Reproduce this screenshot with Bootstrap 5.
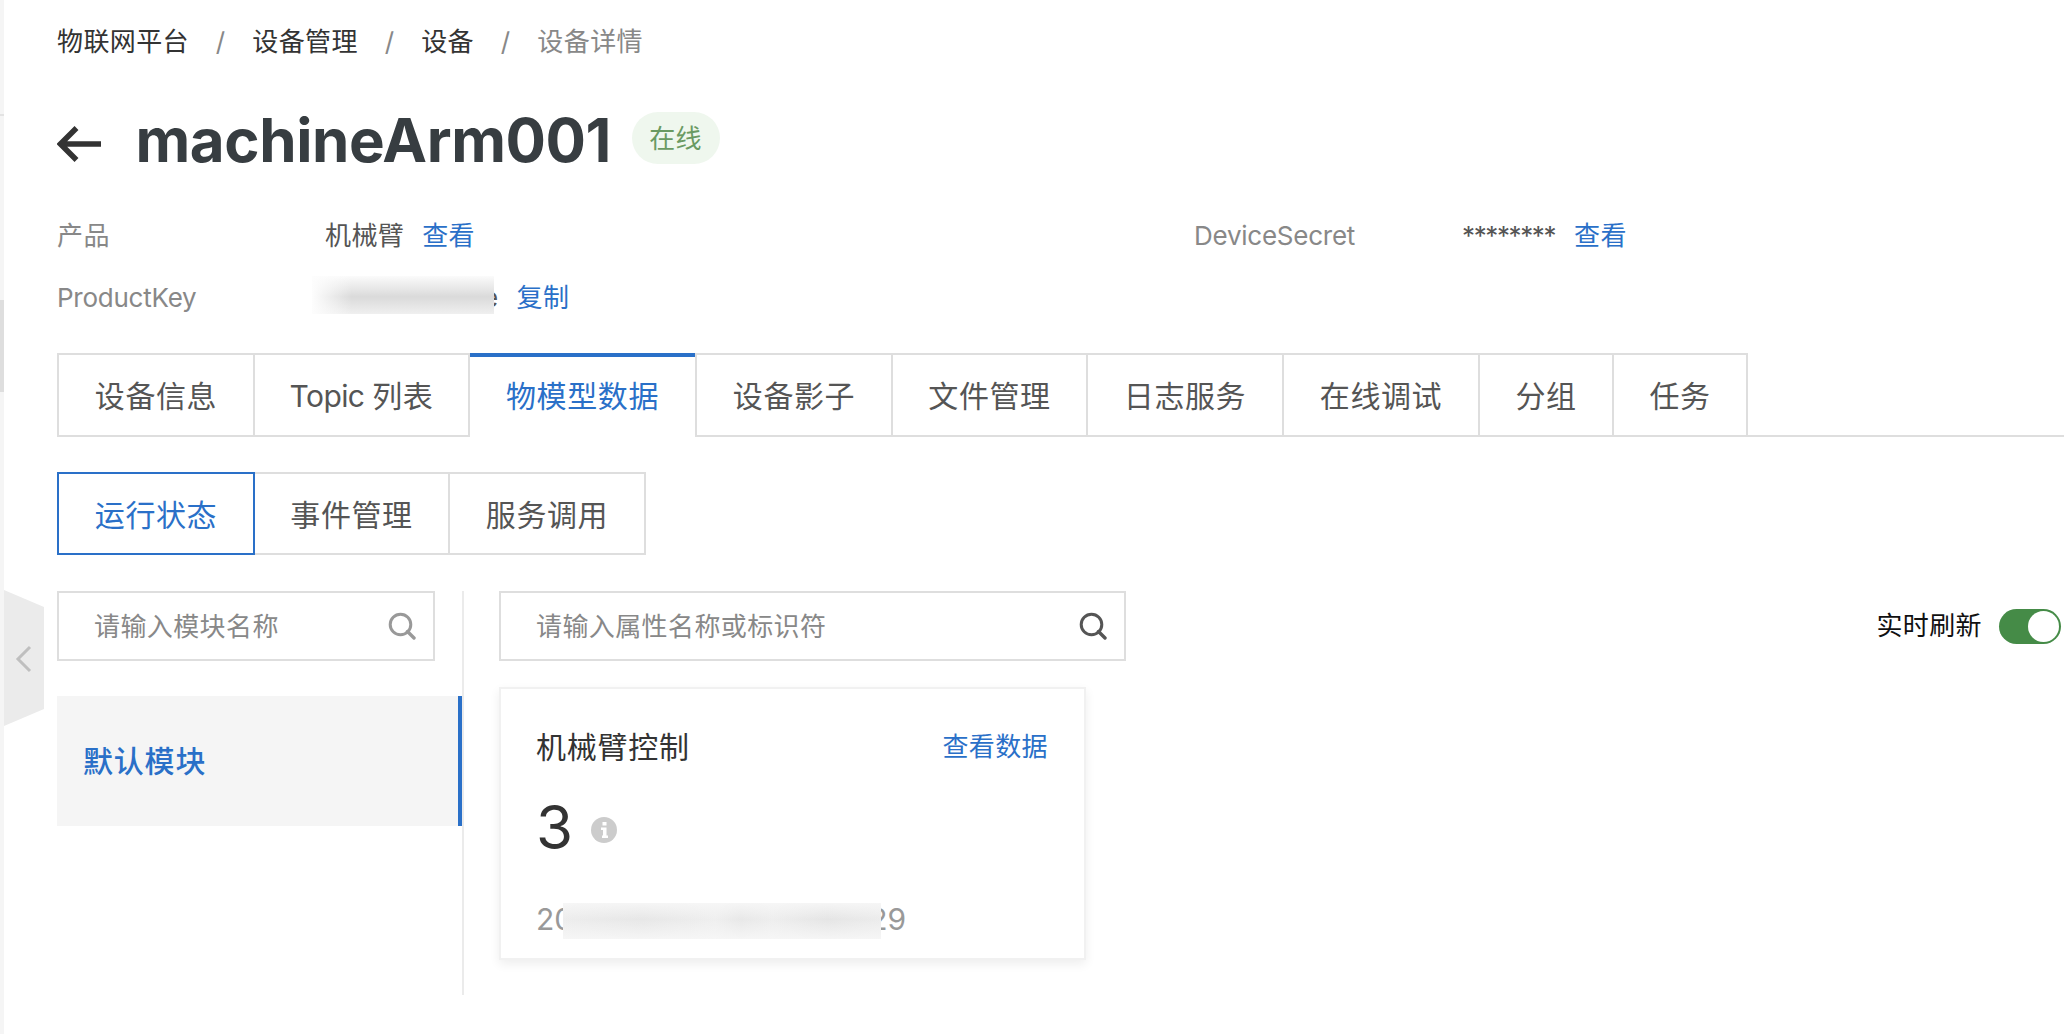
<!DOCTYPE html>
<html lang="zh-CN">
<head>
<meta charset="utf-8">
<title>设备详情</title>
<link href="https://cdn.jsdelivr.net/npm/bootstrap@5.3.0/dist/css/bootstrap.min.css" rel="stylesheet">
<style>
body{font-family:Inter,"Noto Sans CJK SC",sans-serif;font-size:26px;line-height:40px;letter-spacing:.4px;color:#333;background:#fff;height:1034px;overflow:hidden}
a{color:#2a70c8;text-decoration:none}
.side-rail{width:4px;background:#f5f5f5}
.rail-line{height:2px;margin-top:114px;background:#e3e3e3}
.rail-thumb{height:92px;margin-top:184px;background:#dedede}
.rail-handle{left:4px;top:590px;width:40px;height:136px}
.page-main{padding:22px 0 0 53px;min-width:0}
.crumbs{height:40px}
.crumbs a{color:#333}
.crumbs .cur{color:#888}
.crumbs .sep{color:#888;width:63.3px;text-align:center}
.title-row{height:60px;margin-top:47px}
.back-arrow{margin-top:10px}
.title-row h1{font-size:60px;line-height:60px;font-weight:700;color:#373d41;letter-spacing:-.4px;margin:1px 0 0 34.500px}
.state-badge{width:88px;height:52px;border-radius:26px;background:#eff7ee;color:#6a9a62;font-size:26px;font-weight:400;line-height:53px;padding:0;margin:-2px 0 0 20.500px}
.info-list{margin-top:36px}
.info-row{height:62px}
.info-label{width:268px;color:#888}
.info-label.latin{letter-spacing:-.25px}
.stars{letter-spacing:-1.400px}
.info-col{width:1137px}
.info-value{color:#555}
.info-row a{margin-left:18px}
.info-row .stars + a{margin-left:19px}
.masked{width:182px;height:38px;margin:-6px 0 0 -13px;z-index:1;background:linear-gradient(90deg,#fdfdfd,rgba(253,253,253,0) 22%),linear-gradient(180deg,#fbfbfb,rgba(251,251,251,0) 55%,rgba(251,251,251,.65)),#dadada}
.tail-e{margin-left:-11px}
.main-tabs{height:84px;margin-top:24px}
.main-tabs .nav-link,.sub-tabs .nav-link{padding:0;border:0 solid #dedede;border-radius:0;color:#555;font-size:30px;letter-spacing:.6px;text-align:center}
.main-tabs .nav-link{height:84px;line-height:82px;border-width:2px 0 2px 2px}
.main-tabs .nav-link.active{color:#2a70c8;border:0;border-top:4px solid #2a70c8;line-height:78px}
.main-tabs .end-edge{border-right-width:2px}
.topic-word{letter-spacing:-.6px}
.tabs-rest{border-bottom:2px solid #dedede}
.w196{width:196px}.w195{width:195px}.w217{width:217px}.w225{width:225px}.w134{width:134px}.w136{width:136px}.w198{width:198px}
.sub-tabs{margin-top:35px;height:83px}
.sub-tabs .nav-link{height:83px;line-height:82px;border-width:2px 2px 2px 0}
.sub-tabs .nav-link.active{border:2px solid #2a70c8;color:#2a70c8;background:#fff}
.work-area{margin-top:36px;height:404px}
.module-col{width:407px;border-right:2px solid #ebebeb}
.search-field{height:70px;border:2px solid #dedede;padding:0 17px 0 35px;color:#888}
.search-field span{padding-top:2px}
.module-search{width:378px}
.prop-search{width:627px}
.module-item{height:130px;margin-top:35px;padding-left:26px;background:#f5f5f5;border-right:4px solid #2a70c8;color:#2a70c8;font-size:30px;font-weight:500;letter-spacing:.8px}
.prop-col{padding-left:35px}
.prop-card{width:587px;height:273px;margin-top:26px;padding:38px 36px 0 35px;border:2px solid #f1f1f1;border-radius:0;box-shadow:0 4px 10px rgba(0,0,0,.07)}
.prop-name{font-size:30px;letter-spacing:.75px}
.prop-value{font-size:60px;line-height:60px;margin-top:30px}
.prop-value svg{margin:5px 0 0 18px}
.prop-time{font-size:30px;color:#999;letter-spacing:0;margin-top:42px}
.time-mask{width:318px;height:36px;margin:3px -12px 0 -10px;z-index:1;background:linear-gradient(180deg,rgba(247,247,247,.9),rgba(247,247,247,0) 45%,rgba(247,247,247,.9)),linear-gradient(90deg,#ededed,#e7e7e7 25%,#efefef 48%,#e8e8e8 56%,#eee 66%,#e5e5e5 83%,#ececec)}
.refresh{height:70px;margin-right:3px;color:#111}
.toggle-pill{width:62px;height:35px;border-radius:18px;background:#458b47;padding:2px;margin-left:17px}
.toggle-knob{width:31px;height:31px;border-radius:50%;background:#fff}
</style>
</head>
<body class="d-flex">
<aside class="side-rail flex-shrink-0"><div class="rail-line"></div><div class="rail-thumb"></div></aside>
<svg class="rail-handle position-absolute" viewBox="0 0 40 136"><path d="M0 0L40 17V119L0 136Z" fill="#ebebeb"/><path d="M26 57L14 69L26 81" fill="none" stroke="#bfbfbf" stroke-width="3"/></svg>
<main class="page-main flex-grow-1">
<nav class="crumbs d-flex"><a href="#">物联网平台</a><span class="sep">/</span><a href="#">设备管理</a><span class="sep">/</span><a href="#">设备</a><span class="sep">/</span><span class="cur">设备详情</span></nav>
<div class="title-row d-flex align-items-center">
<svg class="back-arrow" width="44" height="36" viewBox="0 0 44 36"><path d="M19.500 2L3.500 18L19.500 34M3.500 18H44" fill="none" stroke="#333" stroke-width="5.500"/></svg>
<h1>machineArm001</h1><span class="badge state-badge">在线</span>
</div>
<div class="info-list">
<div class="info-row d-flex align-items-center"><div class="info-col d-flex"><span class="info-label">产品</span><span class="info-value">机械臂</span><a href="#">查看</a></div><div class="d-flex"><span class="info-label latin">DeviceSecret</span><span class="info-value stars">********</span><a href="#">查看</a></div></div>
<div class="info-row d-flex align-items-center"><span class="info-label latin">ProductKey</span><span class="masked"></span><span class="tail-e info-value">e</span><a href="#">复制</a></div>
</div>
<nav class="nav main-tabs flex-nowrap">
<a class="nav-link w196" href="#">设备信息</a><a class="nav-link end-edge w217" href="#"><span class="topic-word">Topic </span>列表</a><a class="nav-link active w225" href="#">物模型数据</a><a class="nav-link w196" href="#">设备影子</a><a class="nav-link w195" href="#">文件管理</a><a class="nav-link w196" href="#">日志服务</a><a class="nav-link w196" href="#">在线调试</a><a class="nav-link w134" href="#">分组</a><a class="nav-link end-edge w136" href="#">任务</a><span class="tabs-rest flex-grow-1"></span>
</nav>
<nav class="nav sub-tabs"><a class="nav-link active w198" href="#">运行状态</a><a class="nav-link w195" href="#">事件管理</a><a class="nav-link w196" href="#">服务调用</a></nav>
<div class="work-area d-flex">
<div class="module-col flex-shrink-0">
<div class="search-field module-search d-flex align-items-center justify-content-between"><span>请输入模块名称</span><svg width="28" height="28" viewBox="0 0 28 28"><circle cx="12.5" cy="12.5" r="10.3" fill="none" stroke="#999" stroke-width="3"/><path d="M19.5 19.5L26 26" stroke="#999" stroke-width="3.4" stroke-linecap="round"/></svg></div>
<div class="module-item d-flex align-items-center">默认模块</div>
</div>
<div class="prop-col flex-grow-1">
<div class="d-flex justify-content-between">
<div class="search-field prop-search d-flex align-items-center justify-content-between"><span>请输入属性名称或标识符</span><svg width="28" height="28" viewBox="0 0 28 28"><circle cx="12.5" cy="12.5" r="10.3" fill="none" stroke="#555" stroke-width="3"/><path d="M19.5 19.5L26 26" stroke="#555" stroke-width="3.4" stroke-linecap="round"/></svg></div>
<div class="refresh d-flex align-items-center"><span>实时刷新</span><span class="toggle-pill d-flex justify-content-end"><span class="toggle-knob"></span></span></div>
</div>
<div class="card prop-card">
<div class="d-flex justify-content-between align-items-center"><span class="prop-name">机械臂控制</span><a href="#">查看数据</a></div>
<div class="d-flex align-items-center prop-value"><span>3</span><svg width="26" height="26" viewBox="0 0 26 26"><circle cx="13" cy="13" r="13" fill="#ccc"/><path d="M11.5 5h4v3.5h-4zM10 10.500h5.500v8H17V21h-6v-2.500h1v-5.500h-2z" fill="#fff"/></svg></div>
<div class="d-flex align-items-center prop-time"><span>20</span><span class="time-mask"></span><span>29</span></div>
</div>
</div>
</div>
</main>
<script src="https://cdn.jsdelivr.net/npm/bootstrap@5.3.0/dist/js/bootstrap.bundle.min.js"></script>
</body>
</html>
